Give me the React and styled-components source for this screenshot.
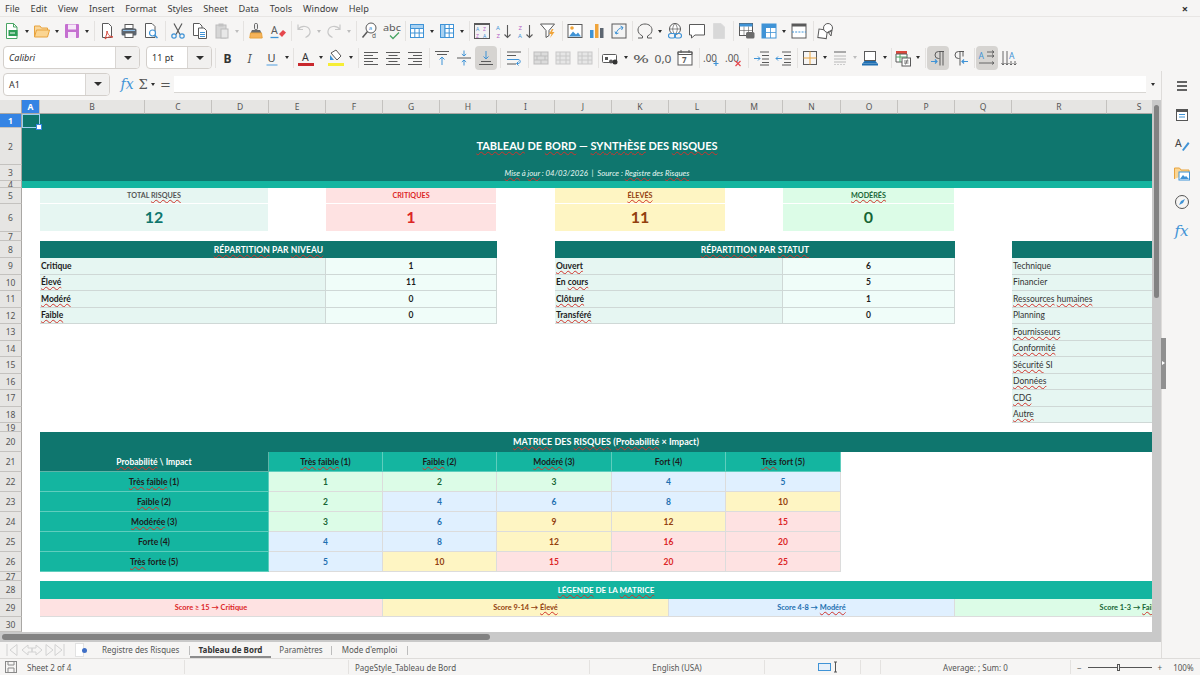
import React from 'react';
import styled, { createGlobalStyle } from 'styled-components';

const TEAL = '#0f766e';
const TEAL2 = '#14b5a0';
const UI_FONT = '"Noto Sans", "Open Sans", sans-serif';
const CELL_FONT = 'Lato, "Liberation Sans", sans-serif';

const GlobalStyle = createGlobalStyle`
  html, body { margin: 0; padding: 0; background: #f6f5f4; overflow: hidden; }
  #root { width: 1200px; height: 675px; }
`;

/* ---------- toolbar icons ---------- */
const GRAY = '#5a5a5a';
const BLUE = '#3f93d6';
const Svg = ({ children }) => (
  <svg width="18" height="18" viewBox="0 0 18 18" fill="none" strokeWidth="1">{children}</svg>
);
const Label = ({ x, y, size = 7, fill = GRAY, weight = 400, fit, children, style }) => (
  <text x={x} y={y} fontSize={size} fill={fill} fontWeight={weight} fontFamily="Noto Sans, sans-serif" textLength={fit} lengthAdjust={fit ? 'spacingAndGlyphs' : undefined} style={style}>{children}</text>
);
const Grid3 = ({ stroke = BLUE, fill = '#fff' }) => (
  <g stroke={stroke}>
    <rect x="2.5" y="2.5" width="13" height="13" fill={fill} />
    <path d="M2.5 6.5h13M2.5 11h13M6.8 2.5v13M11.2 2.5v13" />
  </g>
);

const icons = {
  new: <Svg><path d="M3.5 1.5h7l3.5 3.5v11.5H3.5z" fill="#fff" stroke="#4aa564" /><path d="M10.5 1.5V5H14" stroke="#4aa564" /><rect x="5.5" y="8" width="9" height="6" fill="#2f9e57" /><path d="M7 11h5" stroke="#fff" /></Svg>,
  open: <Svg><path d="M1.500 15V4h5.500l1.500 2h6v2" fill="#f9d79c" stroke="#e8a33d" /><path d="M1.500 15l2-7h13l-2 7z" fill="#fbd592" stroke="#e8a33d" /></Svg>,
  save: <Svg><rect x="2" y="2" width="14" height="14" rx="1" fill="#c56fd0" /><rect x="5" y="2.500" width="8" height="5" fill="#f6e8f8" /><rect x="5" y="10" width="8" height="6" fill="#f6e8f8" /></Svg>,
  pdf: <Svg><path d="M4.500 1.500h6l3 3v11h-9z" fill="#fff" stroke={GRAY} /><path d="M9 9c1 4 2 5 6 6-3-.4-6 0-8 2 1-3 2-5 2-8z" fill="none" stroke="#d8483c" /></Svg>,
  print: <Svg><rect x="5" y="2.500" width="8" height="4" fill="#fff" stroke={GRAY} /><rect x="1.500" y="6.500" width="15" height="7" rx="1.500" fill="#5d6670" /><rect x="5" y="11" width="8" height="4.500" fill="#fff" stroke={GRAY} /><path d="M3 8.500h12" stroke="#8fc0e8" /></Svg>,
  preview: <Svg><path d="M3.500 1.500h6.500l3 3v11h-9.500z" fill="#fff" stroke={GRAY} /><circle cx="10.500" cy="11" r="3" fill="#fff" stroke={BLUE} strokeWidth="1.200" /><path d="M12.800 13.300l2.700 2.700" stroke={BLUE} strokeWidth="1.500" /></Svg>,
  cut: <Svg><path d="M5 1.500l6 11M13 1.500l-6 11" stroke={GRAY} strokeWidth="1.200" /><circle cx="5" cy="14" r="2.200" stroke={BLUE} strokeWidth="1.200" /><circle cx="13" cy="14" r="2.200" stroke={BLUE} strokeWidth="1.200" /></Svg>,
  copy: <Svg><path d="M2.500 1.500h6l2.500 2.500v9.500h-8.500z" fill="#fff" stroke={GRAY} /><path d="M7.500 6h5.500l2.500 2.500v8h-8z" fill="#fff" stroke={GRAY} /><path d="M9 10.500h5M9 12.500h5M9 14.500h5" stroke={BLUE} /></Svg>,
  paste: <Svg><rect x="3" y="3" width="10" height="13" fill="#d6d6d6" stroke="#bcbcbc" /><rect x="8" y="7" width="7" height="9" fill="#e8e8e8" stroke="#bcbcbc" /><rect x="5.500" y="1.500" width="5" height="3" fill="#c2c2c2" /></Svg>,
  brush: <Svg><rect x="7.600" y="1.500" width="2.800" height="6" rx="1" fill="#fff" stroke={GRAY} /><path d="M5 8h8l1.500 3h-11z" fill="#6b6b6b" /><path d="M3.500 11h11l.7 5H2.800z" fill="#f5b35a" stroke="#e8a33d" /></Svg>,
  clear: <Svg><Label x="2" y="12" size="10.500">A</Label><path d="M1.500 15.500h8" stroke={BLUE} strokeWidth="1.300" /><path d="M10 12l4-4 3 2.500-4 4.500z" fill="#e5484d" /></Svg>,
  undo: <Svg><path d="M3 7.500c4-5 11-3.500 12 1.500 .6 3-1.500 5-4.500 6.500M3 2.500v5h5" stroke="#c8c8c8" strokeWidth="1.200" /></Svg>,
  redo: <Svg><path d="M15 7.500c-4-5-11-3.500-12 1.500-.6 3 1.500 5 4.500 6.500M15 2.500v5h-5" stroke="#c8c8c8" strokeWidth="1.200" /></Svg>,
  find: <Svg><circle cx="10" cy="6" r="5" fill="#fff" stroke={GRAY} /><Label x="7.800" y="8" size="6" fill={BLUE}>a</Label><path d="M6.500 9.500L1.500 15.500" stroke={GRAY} strokeWidth="1.500" /><Label x="11" y="15.500" size="6.500">d</Label></Svg>,
  spell: <Svg><Label x="0" y="9" size="8" fit={18}>abc</Label><path d="M7 13.500l3 3 6-6" stroke="#4aa564" strokeWidth="1.300" /></Svg>,
  table: <Svg><Grid3 /><path d="M2.500 2.500h13v4h-13z" fill="#a9d2f2" stroke={BLUE} /></Svg>,
  tablecol: <Svg><Grid3 /><path d="M2.500 2.500h4.300v13H2.500z" fill="#a9d2f2" stroke={BLUE} /></Svg>,
  sort: <Svg><rect x="1.500" y="1.500" width="15" height="15" fill="#f3f3f3" stroke={GRAY} /><path d="M1.500 1.500h15v1.500h-15z" fill={GRAY} /><Label x="3" y="9" size="5" fill={BLUE}>A</Label><Label x="10" y="9" size="5" fill="#b45fc4">Z</Label><Label x="3" y="16" size="5" fill="#b45fc4">Z</Label><Label x="10" y="16" size="5" fill={BLUE}>A</Label></Svg>,
  az: <Svg><Label x="1" y="8" size="6" fill={BLUE}>A</Label><Label x="1.500" y="16" size="6" fill="#b45fc4">Z</Label><path d="M12.500 3v12.500M9.500 12.500l3 3 3-3" stroke={GRAY} strokeWidth="1.100" /></Svg>,
  za: <Svg><Label x="1.500" y="8" size="6" fill="#b45fc4">Z</Label><Label x="1" y="16" size="6" fill={BLUE}>A</Label><path d="M12.500 3v12.500M9.500 12.500l3 3 3-3" stroke={GRAY} strokeWidth="1.100" /></Svg>,
  filter: <Svg><path d="M1.500 2h14l-5.500 6.500v5l-3 2v-7z" fill="#fff" stroke={GRAY} /><path d="M13 7l-3 5h2.500l-1.500 4 4.500-6h-2.500l1.500-3z" fill="#f0a43a" /></Svg>,
  image: <Svg><rect x="2" y="2.500" width="14" height="13" fill="#fff" stroke={GRAY} /><path d="M3 14.500l4-5 3 3 2-2 3 4z" fill={BLUE} /><circle cx="6" cy="6" r="1.800" fill="#f0a43a" /></Svg>,
  chart: <Svg><rect x="2" y="8" width="3.500" height="8" fill={BLUE} /><rect x="7" y="2" width="3.500" height="14" fill="#f0a43a" /><rect x="12" y="6" width="3.500" height="10" fill="#5d6670" /></Svg>,
  pivot: <Svg><rect x="2" y="2" width="14" height="14" fill="#f3f3f3" stroke={GRAY} /><path d="M6 12c1-4 3-6 7-6.500M13 5.500l-2.500-1.500M13 5.500l-1.500 2.500M6 12l-1-2.500M6 12l2.500-1" stroke={BLUE} /></Svg>,
  omega: <Svg><path d="M2 16h4.500v-2C3.500 12.500 2 10.500 2 8c0-3.500 3-6 7-6s7 2.500 7 6c0 2.500-1.500 4.500-4.500 6v2H16" stroke={GRAY} /></Svg>,
  link: <Svg><circle cx="9" cy="7" r="5.500" fill="#fff" stroke={GRAY} /><path d="M3.500 7h11M9 1.500c-3 3-3 8 0 11M9 1.500c3 3 3 8 0 11" stroke={GRAY} strokeWidth=".7" /><rect x="2.500" y="11.500" width="7" height="4.500" rx="2.200" fill="#f6f5f4" stroke={BLUE} strokeWidth="1.100" /><rect x="8.500" y="11.500" width="7" height="4.500" rx="2.200" stroke={BLUE} strokeWidth="1.100" /></Svg>,
  comment: <Svg><path d="M1.500 2.500h15v10.500h-9.500l-3.500 3v-3h-2z" fill="#fff" stroke={GRAY} /></Svg>,
  note: <Svg><path d="M3.500 1.500h7.500l3.500 3.500v11.500h-11z" fill="#d8d8d8" stroke="#dcdcdc" /></Svg>,
  area: <Svg><rect x="1.500" y="1.500" width="13" height="12" fill="#fff" stroke={GRAY} /><path d="M1.500 1.500h13v3h-13z" fill={BLUE} /><path d="M1.500 8.500h13M6 4.500v9M10.500 4.500v9" stroke={GRAY} strokeWidth=".6" /><rect x="8" y="10" width="8.500" height="6.500" rx="1.500" fill="#6b6b6b" /></Svg>,
  freeze: <Svg><rect x="2" y="2" width="14" height="14" fill="#fff" stroke={BLUE} /><path d="M2 2h14v4H2zM2 2h4v14H2z" fill={BLUE} /><path d="M2 10.500h14M10.500 6v10" stroke={BLUE} strokeWidth=".8" /></Svg>,
  split: <Svg><rect x="2" y="2" width="14" height="14" fill="#fff" stroke={GRAY} /><path d="M2 2h14v2.500H2z" fill={GRAY} /><path d="M2 10h14" stroke={BLUE} strokeDasharray="2 1.200" /></Svg>,
  shapes: <Svg><rect x="1.500" y="7.500" width="8.500" height="8.500" fill="#fff" stroke={GRAY} transform="rotate(8 5 11)" /><circle cx="11" cy="6" r="4.500" fill="#fff" stroke={GRAY} /><path d="M11 10l4-2-1 6z" stroke={GRAY} /></Svg>,
  bold: <Svg><Label x="4.500" y="13.500" size="12" weight="700" fill="#333">B</Label></Svg>,
  italic: <Svg><Label x="6.500" y="13.500" size="12" fill="#555" style={{ fontStyle: 'italic' }}>I</Label></Svg>,
  under: <Svg><Label x="4.500" y="12.500" size="11" fill="#444">U</Label><path d="M3.500 16h11" stroke="#8fc0e8" strokeWidth="1.600" /></Svg>,
  color: <Svg><Label x="5" y="12" size="10.500" fill="#333">A</Label><path d="M1 15.500h16" stroke="#c9282d" strokeWidth="3" /></Svg>,
  bg: <Svg><path d="M4 4l5-3 5 6-4 4z" fill="#fff" stroke={GRAY} /><path d="M3 6l4 5H3z" fill={BLUE} /><path d="M1 15.500h16" stroke="#f6ee35" strokeWidth="3" /></Svg>,
  left: <Svg><path d="M2 3.500h14M2 6.500h9M2 9.500h14M2 12.500h9M2 15.500h14" stroke={GRAY} /></Svg>,
  center: <Svg><path d="M2 3.500h14M4.500 6.500h9M2 9.500h14M4.500 12.500h9M2 15.500h14" stroke={GRAY} /></Svg>,
  right: <Svg><path d="M2 3.500h14M7 6.500h9M2 9.500h14M7 12.500h9M2 15.500h14" stroke={GRAY} /></Svg>,
  top: <Svg><path d="M2 2.500h14M4 5.500h10" stroke={GRAY} /><path d="M9 8v8M6.500 10.500L9 8l2.500 2.500" stroke={BLUE} /></Svg>,
  mid: <Svg><path d="M2 9h14" stroke={GRAY} /><path d="M9 1.500V7M6.800 5L9 7l2.200-2M9 16.500V11M6.800 13L9 11l2.200 2" stroke={BLUE} /></Svg>,
  bottom: <Svg><path d="M4 12.500h10M2 15.500h14" stroke={GRAY} /><path d="M9 2v8M6.500 7.500L9 10l2.500-2.500" stroke={BLUE} /></Svg>,
  wrap: <Svg><path d="M2 3h14M2 6.500h9M2 15h9" stroke={GRAY} /><path d="M2 10.500h11c3 0 3 4 0 4h-1M13.500 12.500L11.500 14.500l2 2" stroke={BLUE} /></Svg>,
  merge: <Svg><rect x="2" y="3" width="14" height="12" fill="#dcdcdc" stroke="#bdbdbd" /><path d="M2 7h14M2 11h14M9 3v4M9 11v4M5 7v4M13 7v4" stroke="#bdbdbd" /></Svg>,
  unmerge: <Svg><rect x="2" y="3" width="14" height="12" fill="#e6e6e6" stroke="#c8c8c8" /><path d="M2 7h14M2 11h14M6 3v12M12 3v12" stroke="#c8c8c8" /></Svg>,
  currency: <Svg><rect x="0.500" y="5.500" width="14" height="8" rx="1" fill="#fff" stroke={GRAY} /><circle cx="9" cy="12.500" r="2" fill="#555" /><circle cx="13" cy="13" r="2.500" fill="#333" /><rect x="3" y="8" width="3" height="3" fill="#555" /></Svg>,
  percent: <Svg><Label x="1" y="13.500" size="11.500" fit={16}>%</Label></Svg>,
  number: <Svg><Label x="0.500" y="13.500" size="11.500" fit={17}>0,0</Label></Svg>,
  date: <Svg><rect x="2" y="3" width="14" height="13" fill="#fff" stroke={GRAY} /><path d="M2 3h14v2.500H2zM5 1v3M13 1v3" stroke={GRAY} /><Label x="6" y="14" size="8" weight="700">7</Label></Svg>,
  adddec: <Svg><Label x="0" y="13" size="11" fit={14}>.00</Label><path d="M13 12v5M10.500 14.500h5" stroke={BLUE} strokeWidth="1.200" /></Svg>,
  deldec: <Svg><Label x="0" y="13" size="11" fit={14}>.00</Label><path d="M10.500 12l5 5M15.500 12l-5 5" stroke="#e5484d" strokeWidth="1.200" /></Svg>,
  indent: <Svg><path d="M7 3h9M9 6.500h7M9 10h7M9 13.500h7M7 16h9" stroke={GRAY} /><path d="M1 9.500h6M5 7.500l2 2-2 2" stroke={BLUE} /></Svg>,
  outdent: <Svg><path d="M7 3h9M9 6.500h7M9 10h7M9 13.500h7M7 16h9" stroke={GRAY} /><path d="M7 9.500H1M3 7.500l-2 2 2 2" stroke={BLUE} /></Svg>,
  borders: <Svg><rect x="2.500" y="2.500" width="13" height="13" stroke={GRAY} /><path d="M2.500 9h13M9 2.500v13" stroke="#e8a33d" /></Svg>,
  bstyle: <Svg><path d="M3 3h12" stroke="#aaa" strokeWidth="2" /><path d="M3 7h12M3 10h12M3 13h12" stroke="#b8b8b8" /><path d="M3 15.500h12" stroke="#ccc" strokeDasharray="2 1" /></Svg>,
  bcolor: <Svg><rect x="3.500" y="2.500" width="11" height="9" fill="#fff" stroke={GRAY} /><path d="M1 14.500h16v2H1z" fill="#1f6fb2" /><path d="M3.500 12h11l2 2.500H1.500z" fill="#1f6fb2" /></Svg>,
  cond: <Svg><path d="M2 2h11v3H2z" fill="#d8483c" /><path d="M2 5h11v8H2z" fill="#fff" stroke={GRAY} /><path d="M2 8h11M6 5v8" stroke="#4aa564" /><rect x="8" y="9" width="8.500" height="8" fill="#fff" stroke={GRAY} /><path d="M10 12h4.500M10 14h4.500M13.500 10.500l-2 5" stroke={GRAY} strokeWidth=".8" /></Svg>,
  ltr: <Svg><path d="M15 2.500H9.500a3.500 3.500 0 000 7h1M11 2.500v14M14 2.500v14" stroke={GRAY} /><path d="M2 12.500h6M6 10.500l2 2-2 2" stroke={BLUE} strokeWidth="1.200" /></Svg>,
  rtl: <Svg><path d="M13 2.500H7.500a3.500 3.500 0 000 7h1M9 2.500v14M12 2.500v5" stroke={GRAY} /><path d="M17 12.500h-6M13 10.500l-2 2 2 2" stroke={BLUE} strokeWidth="1.200" /></Svg>,
  hdir: <Svg><Label x="0.500" y="10" size="8.500" fill={BLUE}>A</Label><path d="M9 3h7M9 7h7M14 1.500l2 1.500-2 1.500M14 5.500l2 1.500-2 1.500M1 14h15M14 12.500l2 1.500-2 1.500" stroke={GRAY} strokeWidth=".9" /></Svg>,
  vdir: <Svg><Label x="9" y="10" size="8.500" fill={BLUE}>A</Label><path d="M3 2v14M7 2v14M1.500 14l1.500 2 1.500-2M5.500 14L7 16l1.500-2M11 12v4M9.500 14.500L11 16l1.500-1.500M15 12v4M13.500 14.500L15 16l1.500-1.500" stroke={GRAY} strokeWidth=".9" /></Svg>,
};

/* ---------- toolbars ---------- */
// a number is a separator of that width, d a small dropdown arrow, * marks a pressed button
const TOOLS_TOP = ['new', 'd', 'open', 'd', 'save', 'd', 5, 'pdf', 'print', 'preview', 5, 'cut', 'copy', 'paste', 'f', 4, 'brush', 'clear', 4, 'undo', 'f', 'redo', 'f', 6, 'find', 'spell', 3, 'table', 'd', 'tablecol', 'd', 5, 'sort', 'az', 'za', 'filter', 5, 'image', 'chart', 'pivot', 4, 'omega', 'd', 'link', 'comment', 'note', 6, 'area', 'freeze', 'd', 'split', 5, 'shapes'];
const TOOLS_FORMAT = [5, 'bold', 'italic', 'under', 'd', 4, 'color', 'd', 'bg', 'd', 5, 'left', 'center', 'right', 5, 'top', 'mid', '*bottom', 6, 'wrap', 5, 'merge', 'unmerge', 'unmerge', 4, 'currency', 'd', 'percent', 'number', 'date', 5, 'adddec', 'deldec', 6, 'indent', 'outdent', 4, 'borders', 'd', 'bstyle', 'f', 'bcolor', 'd', 3, 'cond', 'd', 5, '*ltr', 'rtl', 5, '*hdir', 'vdir'];

const ToolItems = ({ items }) => items.map((item, i) => {
  if (typeof item === 'number') return <Sep key={i} $w={item} />;
  if (item === 'd' || item === 'f') return <DropSlot key={i}><Arrow $faint={item === 'f'} /></DropSlot>;
  const active = item[0] === '*';
  return <Tool key={i} $active={active}>{icons[active ? item.slice(1) : item]}</Tool>;
});

const Shell = styled.div`
  width: 1200px;
  height: 675px;
  display: flex;
  flex-direction: column;
  background: #f6f5f4;
  color: #3d3d3d;
  font-family: ${UI_FONT};
  overflow: hidden;
`;

const MenuBar = styled.div`
  height: 16px;
  display: flex;
  align-items: center;
  padding: 0 5px;
  gap: 10.9px;
  font-size: 9.2px;
  position: relative;
`;

const Close = styled.span`
  margin-left: auto;
  margin-right: 7px;
  font-size: 11px;
  font-weight: 700;
  color: #333;
`;

const ToolRow = styled.div`
  height: ${(p) => p.$h}px;
  display: flex;
  align-items: center;
  padding-left: ${(p) => p.$pad}px;
  padding-bottom: ${(p) => p.$pb || 0}px;
  box-sizing: border-box;
  border-top: ${(p) => (p.$line ? '1px solid #e8e6e4' : 'none')};
`;

const Tool = styled.div`
  width: 22px;
  height: 24px;
  flex: none;
  display: flex;
  align-items: center;
  justify-content: center;
  border-radius: 4px;
  background: ${(p) => (p.$active ? '#d6d4d1' : 'transparent')};
`;

const DropSlot = styled.div`
  width: ${(p) => p.$w || 8}px;
  flex: none;
  display: flex;
  justify-content: center;
`;

const Arrow = styled.span`
  width: 0;
  height: 0;
  border-left: 2.5px solid transparent;
  border-right: 2.5px solid transparent;
  border-top: 3px solid ${(p) => (p.$faint ? '#bdbdbd' : '#2e2e2e')};
`;

const Sep = styled.div`
  width: ${(p) => p.$w}px;
  height: 20px;
  flex: none;
  position: relative;
  &::after {
    content: '';
    position: absolute;
    left: 50%;
    top: 0;
    bottom: 0;
    width: 1px;
    background: #e4e2e0;
  }
`;

const Combo = styled.div`
  width: ${(p) => p.$w}px;
  height: 23px;
  margin-right: ${(p) => p.$mr || 0}px;
  box-sizing: border-box;
  flex: none;
  display: flex;
  border: 1px solid #d3cfcb;
  border-radius: 4px;
  background: #fff;
  overflow: hidden;
  font-size: 9px;
`;

const ComboText = styled.div`
  flex: 1;
  display: flex;
  align-items: center;
  padding-left: 5px;
  font-style: ${(p) => (p.$italic ? 'italic' : 'normal')};
  color: #333;
`;

const ComboButton = styled.div`
  width: 23px;
  display: flex;
  align-items: center;
  justify-content: center;
  background: #f1f0ef;
  border-left: 1px solid #d9d6d3;
  ${Arrow} {
    border-left-width: 4px;
    border-right-width: 4px;
    border-top-width: 4px;
  }
`;

const Work = styled.div`
  height: 587px;
  display: flex;
`;

const Main = styled.div`
  width: 1161px;
  display: flex;
  flex-direction: column;
`;

const FormulaBar = styled.div`
  height: 29px;
  display: flex;
  align-items: center;
  padding-left: 3px;
  box-sizing: border-box;
  padding-bottom: 3px;
`;

const FormulaIcon = styled.span`
  width: ${(p) => p.$w}px;
  flex: none;
  text-align: center;
  font-family: "DejaVu Serif", serif;
  font-style: ${(p) => (p.$italic ? 'italic' : 'normal')};
  font-size: ${(p) => p.$size || 14}px;
  color: ${(p) => p.$color || '#555'};
`;

const FormulaInput = styled.div`
  width: 972px;
  height: 17px;
  flex: none;
  box-sizing: border-box;
  background: #fff;
  border-bottom: 1px solid #d8d6d3;
`;

const SheetRow = styled.div`
  height: 532px;
  display: flex;
`;

const Sheet = styled.div`
  width: 1152px;
  height: 532px;
  flex: none;
  overflow: hidden;
  background: #fff;
  display: grid;
  grid-template-columns: 22px 18px 105px 67px 57px 57px 57px 57px 57px 58px 57px 57px 57px 57px 58px 57px 57px 57px 95px 65px 135px;
  grid-template-rows: 14px 14px 37px 16px 7px 16px 28px 9px 17px repeat(10, 16.5px) 9px 20px 20px repeat(5, 20px) 9px 18px 18px 15px;
  font-family: ${CELL_FONT};
  font-size: 8.5px;
`;

const ColHead = styled.div`
  grid-row: 1;
  grid-column: ${(p) => p.$c};
  display: flex;
  align-items: center;
  justify-content: center;
  box-sizing: border-box;
  background: ${(p) => (p.$active ? '#3584e4' : '#e6e5e3')};
  color: ${(p) => (p.$active ? '#fff' : '#555')};
  font-family: ${UI_FONT};
  font-size: 8.5px;
  font-weight: ${(p) => (p.$active ? 700 : 400)};
  border-right: 1px solid #c4c2bf;
  border-bottom: 1px solid #a9a7a4;
`;

const RowHead = styled.div`
  grid-column: 1;
  grid-row: ${(p) => p.$r};
  display: flex;
  align-items: center;
  justify-content: center;
  box-sizing: border-box;
  background: ${(p) => (p.$active ? '#3584e4' : '#e6e5e3')};
  color: ${(p) => (p.$active ? '#fff' : '#555')};
  font-family: ${UI_FONT};
  font-size: 8.5px;
  font-weight: ${(p) => (p.$active ? 700 : 400)};
  border-right: 1px solid #a9a7a4;
  border-bottom: 1px solid #c4c2bf;
  overflow: hidden;
`;

const Corner = styled.div`
  grid-column: 1;
  grid-row: 1;
  background: #e6e5e3;
  border-right: 1px solid #a9a7a4;
  border-bottom: 1px solid #a9a7a4;
`;

const Cell = styled.div`
  grid-column: ${(p) => p.$c};
  grid-row: ${(p) => p.$r};
  display: flex;
  align-items: center;
  justify-content: ${(p) => (p.$left ? 'flex-start' : 'center')};
  box-sizing: border-box;
  white-space: pre;
  overflow: hidden;
  min-width: 0;
  padding-left: ${(p) => (p.$left ? '1px' : '0')};
  padding-bottom: ${(p) => p.$pb || 0}px;
  background: ${(p) => p.$bg || 'transparent'};
  color: ${(p) => p.$fg || '#1c1c1c'};
  font-weight: ${(p) => (p.$bold ? 700 : 400)};
  font-size: ${(p) => p.$size || 8.5}px;
  font-style: ${(p) => (p.$italic ? 'italic' : 'normal')};
  letter-spacing: ${(p) => p.$track || 0}px;
  border-right: ${(p) => (p.$line ? `1px solid ${p.$line}` : 'none')};
  border-bottom: ${(p) => (p.$line ? `1px solid ${p.$line}` : 'none')};
`;

const Wavy = styled.span`
  text-decoration: underline wavy #d0342c;
  text-decoration-thickness: 1px;
  text-underline-offset: 1px;
  text-decoration-skip-ink: none;
`;

const CellCursor = styled.div`
  grid-column: 2;
  grid-row: 2;
  box-sizing: border-box;
  border: 1px solid #9fd0f0;
  position: relative;
  &::after {
    content: '';
    position: absolute;
    right: -3px;
    bottom: -3px;
    width: 4px;
    height: 4px;
    background: #fff;
    border: 1px solid #3584e4;
  }
`;

const VScroll = styled.div`
  width: 9px;
  flex: none;
  background: #c9c9c9;
  padding: 5px 2px 0;
  box-sizing: border-box;
`;

const VThumb = styled.div`
  height: 193px;
  width: 5px;
  border-radius: 3px;
  background: #828282;
`;

const HScroll = styled.div`
  height: 10px;
  flex: none;
  background: #c9c9c9;
  padding: 2px 0 0 2px;
  box-sizing: border-box;
`;

const HThumb = styled.div`
  width: 488px;
  height: 6px;
  border-radius: 3px;
  background: #828282;
`;

const TabBar = styled.div`
  height: 16px;
  display: flex;
  align-items: center;
  font-size: 8px;
  color: #555;
`;

const TabNav = styled.div`
  width: 66px;
  margin-left: 6px;
  flex: none;
  display: flex;
  align-items: center;
`;

const TabSheetIcon = styled.div`
  width: 9px;
  height: 14px;
  background: #fff;
  border: 1px solid #e2e2e2;
  margin-left: 3px;
  margin-right: -2px;
  box-sizing: border-box;
`;

const TabDot = styled.span`
  width: 5px;
  height: 5px;
  border-radius: 50%;
  background: #3f6fc6;
  margin-right: 15px;
`;

const Tab = styled.div`
  height: 16px;
  flex: none;
  width: ${(p) => p.$w}px;
  display: flex;
  align-items: center;
  justify-content: ${(p) => (p.$left ? 'flex-start' : 'center')};
  box-sizing: border-box;
  padding-bottom: ${(p) => (p.$active ? 0 : 2)}px;
  font-weight: ${(p) => (p.$active ? 700 : 400)};
  color: ${(p) => (p.$active ? '#333' : '#555')};
  border-bottom: ${(p) => (p.$active ? '2px solid #8c8c8c' : 'none')};
`;

const TabSep = styled.div`
  width: 1px;
  height: 9px;
  flex: none;
  background: #bdbdbd;
`;

const Sidebar = styled.div`
  width: 39px;
  flex: none;
  border-left: 1px solid #dedcda;
  display: flex;
  flex-direction: column;
  align-items: center;
  padding-top: 5px;
  gap: 9px;
  position: relative;
`;

const SideIcon = styled.div`
  width: 20px;
  height: 20px;
  display: flex;
  align-items: center;
  justify-content: center;
`;

const DeckHandle = styled.div`
  position: absolute;
  left: -1px;
  top: 267px;
  width: 5px;
  height: 51px;
  background: #909090;
  &::after {
    content: '';
    position: absolute;
    top: 23px;
    left: 1px;
    border-left: 3px solid #fff;
    border-top: 2.5px solid transparent;
    border-bottom: 2.5px solid transparent;
  }
`;

const StatusBar = styled.div`
  height: 17px;
  flex: none;
  display: flex;
  align-items: center;
  border-top: 1px solid #dedcda;
  box-sizing: border-box;
  font-size: 8px;
  color: #555;
`;

const StatusCell = styled.div`
  width: ${(p) => p.$w}px;
  height: 14px;
  flex: none;
  display: flex;
  align-items: center;
  justify-content: ${(p) => (p.$left ? 'flex-start' : 'center')};
  box-sizing: border-box;
  padding-left: ${(p) => p.$pad || 0}px;
  gap: 2px;
  white-space: nowrap;
  border-right: ${(p) => (p.$plain ? 'none' : '1px solid #e4e2e0')};
`;

const StatusSave = styled.svg`
  margin-right: 8px;
`;

const ZoomTrack = styled.div`
  width: 64px;
  height: 1px;
  margin: 0 4px;
  background: #555;
  position: relative;
  &::after {
    content: '';
    position: absolute;
    left: 29px;
    top: -3px;
    width: 3px;
    height: 7px;
    box-sizing: border-box;
    border: 1px solid #555;
    background: #f6f5f4;
  }
`;

const ZoomValue = styled.span`
  margin-left: 9px;
`;

/* ---------- sheet data ---------- */
const COLS = ['A', 'B', 'C', 'D', 'E', 'F', 'G', 'H', 'I', 'J', 'K', 'L', 'M', 'N', 'O', 'P', 'Q', 'R', 'S'];
const ROWS = Array.from({ length: 30 }, (_, i) => i + 1);

// col letter to a grid line: A starts on line 2
const line = (l) => l.charCodeAt(0) - 63;
const span = (a, b) => `${line(a)} / ${line(b) + 1}`;
const rowLine = (n) => n + 1;

// words between ~ get the spell checker's red underline
const Txt = ({ t }) => (
  <span>
    {t.split('~').map((part, i) => (i % 2 ? <Wavy key={i}>{part}</Wavy> : <React.Fragment key={i}>{part}</React.Fragment>))}
  </span>
);

const LIGHT = '#e6f6f2';
const PALE = '#f0fdf9';
const LINE = '#cfd8d6';
const SOFT = '#dcdcdc';
const TEAL_LINE = '#5fcdbd';

const KPIS = [
  { from: 'B', to: 'D', label: 'TOTAL ~RISQUES~', value: '12', bg: LIGHT, title: '#555', fg: TEAL },
  { from: 'F', to: 'H', label: 'CRITIQUES', value: '1', bg: '#fee2e2', title: '#dc2626', fg: '#dc2626' },
  { from: 'J', to: 'L', label: '~ÉLEVÉS~', value: '11', bg: '#fef5c3', title: '#92400e', fg: '#92400e' },
  { from: 'N', to: 'P', label: '~MODÉRÉS~', value: '0', bg: '#dcfce7', title: '#166534', fg: '#166534' },
];

const TABLES = [
  { from: 'B', mid: 'E', val: 'F', to: 'H', title: '~RÉPARTITION~ PAR ~NIVEAU~', rows: [['Critique', 1], ['~Élevé~', 11], ['~Modéré~', 0], ['~Faible~', 0]] },
  { from: 'J', mid: 'M', val: 'N', to: 'P', title: '~RÉPARTITION~ PAR ~STATUT~', rows: [['~Ouvert~', 6], ['En ~cours~', 5], ['~Clôturé~', 1], ['~Transféré~', 0]] },
];

const CATEGORIES = ['Technique', 'Financier', '~Ressources~ ~humaines~', 'Planning', '~Fournisseurs~', '~Conformité~', '~Sécurité~ SI', '~Données~', '~CDG~', '~Autre~'];

const IMPACTS = [['E', 'F', '~Très~ ~faible~ (1)'], ['G', 'H', '~Faible~ (2)'], ['I', 'J', '~Modéré~ (3)'], ['K', 'L', 'Fort (4)'], ['M', 'N', '~Très~ fort (5)']];
const PROBAS = ['~Très~ ~faible~ (1)', '~Faible~ (2)', '~Modérée~ (3)', 'Forte (4)', '~Très~ forte (5)'];

const scoreColors = (s) => {
  if (s >= 15) return { bg: '#fee2e2', fg: '#dc2626' };
  if (s >= 9) return { bg: '#fef5c3', fg: '#92400e' };
  if (s >= 4) return { bg: '#e0f0ff', fg: '#1d6fb0' };
  return { bg: '#dcfce7', fg: '#166534' };
};

const LEGEND = [
  { from: 'B', to: 'F', t: 'Score ≥ 15 → Critique', s: 15 },
  { from: 'G', to: 'K', t: 'Score 9-14 → ~Élevé~', s: 10 },
  { from: 'L', to: 'P', t: 'Score 4-8 → ~Modéré~', s: 4 },
  { from: 'Q', to: 'T', t: 'Score 1-3 → ~Faible~', s: 1 },
];

const NavArrows = () => (
  <svg width="60" height="14" viewBox="0 0 60 14" fill="none" stroke="#d2d2d2" strokeWidth="1">
    <path d="M1 1v12M11 1.500L4 7l7 5.500z" />
    <path d="M22 2l-6 5 6 5v-3h4V5h-4zM30 2l6 5-6 5V9h-4V5h4z" />
    <path d="M40 1.500l7 5.500-7 5.500zM58 1v12M49 1.500l7 5.500-7 5.500z" />
  </svg>
);

const SheetGrid = () => (
  <Sheet>
    <Corner />
    {COLS.map((c) => <ColHead key={c} $c={line(c)} $active={c === 'A'}>{c}</ColHead>)}
    {ROWS.map((r) => <RowHead key={r} $r={rowLine(r)} $active={r === 1}>{r}</RowHead>)}

    <Cell $c={span('A', 'T')} $r="2 / 5" $bg={TEAL} />
    <CellCursor />
    <Cell $c={span('A', 'S')} $r={rowLine(2)} $fg="#fff" $bold $size={11} $pb={3}><Txt t="~TABLEAU~ DE ~BORD~ — ~SYNTHÈSE~ DES ~RISQUES~" /></Cell>
    <Cell $c={span('A', 'S')} $r={rowLine(3)} $fg="#e6f6f2" $italic $size={7.8}><Txt t="~Mise~ à ~jour~ : 04/03/2026  |  Source : ~Registre~ des ~Risques~" /></Cell>
    <Cell $c={span('A', 'T')} $r={rowLine(4)} $bg={TEAL2} />

    {KPIS.map((k) => (
      <React.Fragment key={k.from}>
        <Cell $c={span(k.from, k.to)} $r={rowLine(5)} $bg={k.bg} $fg={k.title} $bold $size={7.2} $line="#fff"><Txt t={k.label} /></Cell>
        <Cell $c={span(k.from, k.to)} $r={rowLine(6)} $bg={k.bg} $fg={k.fg} $bold $size={16} $pb={2} $line="#fff">{k.value}</Cell>
      </React.Fragment>
    ))}

    {TABLES.map((t) => (
      <React.Fragment key={t.from}>
        <Cell $c={span(t.from, t.to)} $r={rowLine(8)} $bg={TEAL} $fg="#fff" $bold $size={8.5} $track={0.1}><Txt t={t.title} /></Cell>
        {t.rows.map(([label, value], i) => (
          <React.Fragment key={label}>
            <Cell $c={span(t.from, t.mid)} $r={rowLine(9 + i)} $bg={LIGHT} $left $bold $line={LINE}><Txt t={label} /></Cell>
            <Cell $c={span(t.val, t.to)} $r={rowLine(9 + i)} $bg={PALE} $bold $line={LINE}>{value}</Cell>
          </React.Fragment>
        ))}
      </React.Fragment>
    ))}

    <Cell $c={span('R', 'T')} $r={rowLine(8)} $bg={TEAL} />
    {CATEGORIES.map((name, i) => (
      <Cell key={name} $c={span('R', 'T')} $r={rowLine(9 + i)} $bg={LIGHT} $left $fg="#333" $line={LINE}><Txt t={name} /></Cell>
    ))}

    <Cell $c={span('B', 'S')} $r={rowLine(20)} $bg={TEAL} $fg="#fff" $bold $size={9} $pb={1}><Txt t="~MATRICE~ DES ~RISQUES~ (~Probabilité~ × Impact)" /></Cell>
    <Cell $c={span('B', 'D')} $r={rowLine(21)} $bg={TEAL} $fg="#fff" $bold $line="#5fb3a8"><Txt t="~Probabilité~ \ Impact" /></Cell>
    {IMPACTS.map(([a, b, label]) => (
      <Cell key={a} $c={span(a, b)} $r={rowLine(21)} $bg={TEAL2} $bold $line={TEAL_LINE}><Txt t={label} /></Cell>
    ))}
    {PROBAS.map((label, p) => (
      <React.Fragment key={label}>
        <Cell $c={span('B', 'D')} $r={rowLine(22 + p)} $bg={TEAL2} $bold $line={TEAL_LINE}><Txt t={label} /></Cell>
        {IMPACTS.map(([a, b], i) => {
          const score = (p + 1) * (i + 1);
          const { bg, fg } = scoreColors(score);
          return <Cell key={a} $c={span(a, b)} $r={rowLine(22 + p)} $bg={bg} $fg={fg} $bold $line={SOFT}>{score}</Cell>;
        })}
      </React.Fragment>
    ))}

    <Cell $c={span('B', 'S')} $r={rowLine(28)} $bg={TEAL2} $fg="#fff" $bold $size={8}><Txt t="~LÉGENDE~ DE LA ~MATRICE~" /></Cell>
    {LEGEND.map((l) => {
      const { bg, fg } = scoreColors(l.s);
      return <Cell key={l.from} $c={span(l.from, l.to)} $r={rowLine(29)} $bg={bg} $fg={fg} $bold $size={7.4} $line={SOFT}><Txt t={l.t} /></Cell>;
    })}
  </Sheet>
);

const App = () => (
  <Shell>
    <GlobalStyle />
    <MenuBar>
      {['File', 'Edit', 'View', 'Insert', 'Format', 'Styles', 'Sheet', 'Data', 'Tools', 'Window', 'Help'].map((m) => <span key={m}>{m}</span>)}
      <Close>×</Close>
    </MenuBar>
    <ToolRow $h={29} $pad={1} $line><ToolItems items={TOOLS_TOP} /></ToolRow>
    <ToolRow $h={26} $pad={3} $pb={1}>
      <Combo $w={137} $mr={6}><ComboText $italic>Calibri</ComboText><ComboButton><Arrow /></ComboButton></Combo>
      <Combo $w={66}><ComboText>11 pt</ComboText><ComboButton><Arrow /></ComboButton></Combo>
      <ToolItems items={TOOLS_FORMAT} />
    </ToolRow>
    <Work>
      <Main>
        <FormulaBar>
          <Combo $w={107} $mr={7}><ComboText>A1</ComboText><ComboButton><Arrow /></ComboButton></Combo>
          <FormulaIcon $w={20} $italic $color={BLUE}>fx</FormulaIcon>
          <FormulaIcon $w={12} $size={13}>Σ</FormulaIcon>
          <DropSlot><Arrow /></DropSlot>
          <FormulaIcon $w={17} $size={13}>=</FormulaIcon>
          <FormulaInput />
          <DropSlot $w={14}><Arrow /></DropSlot>
        </FormulaBar>
        <SheetRow>
          <SheetGrid />
          <VScroll><VThumb /></VScroll>
        </SheetRow>
        <HScroll><HThumb /></HScroll>
        <TabBar>
          <TabNav><NavArrows /></TabNav>
          <TabSheetIcon />
          <TabDot />
          <Tab $w={87} $left>Registre des Risques</Tab>
          <TabSep />
          <Tab $w={81} $active>Tableau de Bord</Tab>
          <Tab $w={60}>Paramètres</Tab>
          <TabSep />
          <Tab $w={75}>Mode d'emploi</Tab>
          <TabSep />
        </TabBar>
      </Main>
      <Sidebar>
        <DeckHandle />
        <SideIcon>
          <svg width="14" height="14" viewBox="0 0 14 14" stroke="#333" strokeWidth="1.5"><path d="M2 3h10M2 7h10M2 11h10" /></svg>
        </SideIcon>
        <SideIcon>
          <svg width="16" height="16" viewBox="0 0 16 16" fill="none" stroke="#555"><rect x="2.5" y="2.5" width="11" height="11" fill="#fff" /><path d="M2.5 2.500h11v2h-11z" fill="#555" /><path d="M5 7.500h6M5 10h6" stroke={BLUE} /></svg>
        </SideIcon>
        <SideIcon>
          <svg width="18" height="18" viewBox="0 0 18 18" fill="none"><text x="2" y="12" fontSize="10.5" fill="#444" fontFamily="Noto Sans, sans-serif">A</text><path d="M9 15l6-8 1.500 1.500-6 7.500z" fill={BLUE} /></svg>
        </SideIcon>
        <SideIcon>
          <svg width="18" height="18" viewBox="0 0 18 18" stroke="#e8a33d"><path d="M1.500 15V4h5l1.500 2h8v3" fill="#fbd592" /><rect x="6" y="8" width="10.5" height="8" fill="#fff" stroke={BLUE} /><path d="M7 15l3-4 2 2 1-1 3 3z" fill={BLUE} stroke="none" /></svg>
        </SideIcon>
        <SideIcon>
          <svg width="16" height="16" viewBox="0 0 16 16" fill="none"><circle cx="8" cy="8" r="6.5" stroke="#555" /><path d="M11 5L9 9 5 11l2-4z" fill={BLUE} /></svg>
        </SideIcon>
        <SideIcon><FormulaIcon $w={20} $italic $color={BLUE} $size={15}>fx</FormulaIcon></SideIcon>
      </Sidebar>
    </Work>
    <StatusBar>
      <StatusCell $w={185} $left $pad={5}>
        <StatusSave width="12" height="12" viewBox="0 0 12 12" fill="none" stroke="#8a8a8a"><rect x=".5" y=".5" width="11" height="11" /><path d="M3 .5v3.500h6V.5M3 11.500V7h6v4.500" /></StatusSave>
        Sheet 2 of 4
      </StatusCell>
      <StatusCell $w={164} />
      <StatusCell $w={241} $left $pad={6}>PageStyle_Tableau de Bord</StatusCell>
      <StatusCell $w={175}>English (USA)</StatusCell>
      <StatusCell $w={78} $plain $left $pad={53}>
        <svg width="22" height="12" viewBox="0 0 22 12" fill="none"><rect x=".5" y="2.500" width="12" height="7" fill="#e6f0fa" stroke={BLUE} /><path d="M16 1h3M16 11h3M17.500 1v10" stroke="#555" /></svg>
      </StatusCell>
      <StatusCell $w={18} />
      <StatusCell $w={20} />
      <StatusCell $w={190}>Average: ; Sum: 0</StatusCell>
      <StatusCell $w={129} $plain $left $pad={6}>
        <span>−</span><ZoomTrack /><span>+</span><ZoomValue>100%</ZoomValue>
      </StatusCell>
    </StatusBar>
  </Shell>
);

export default App;
